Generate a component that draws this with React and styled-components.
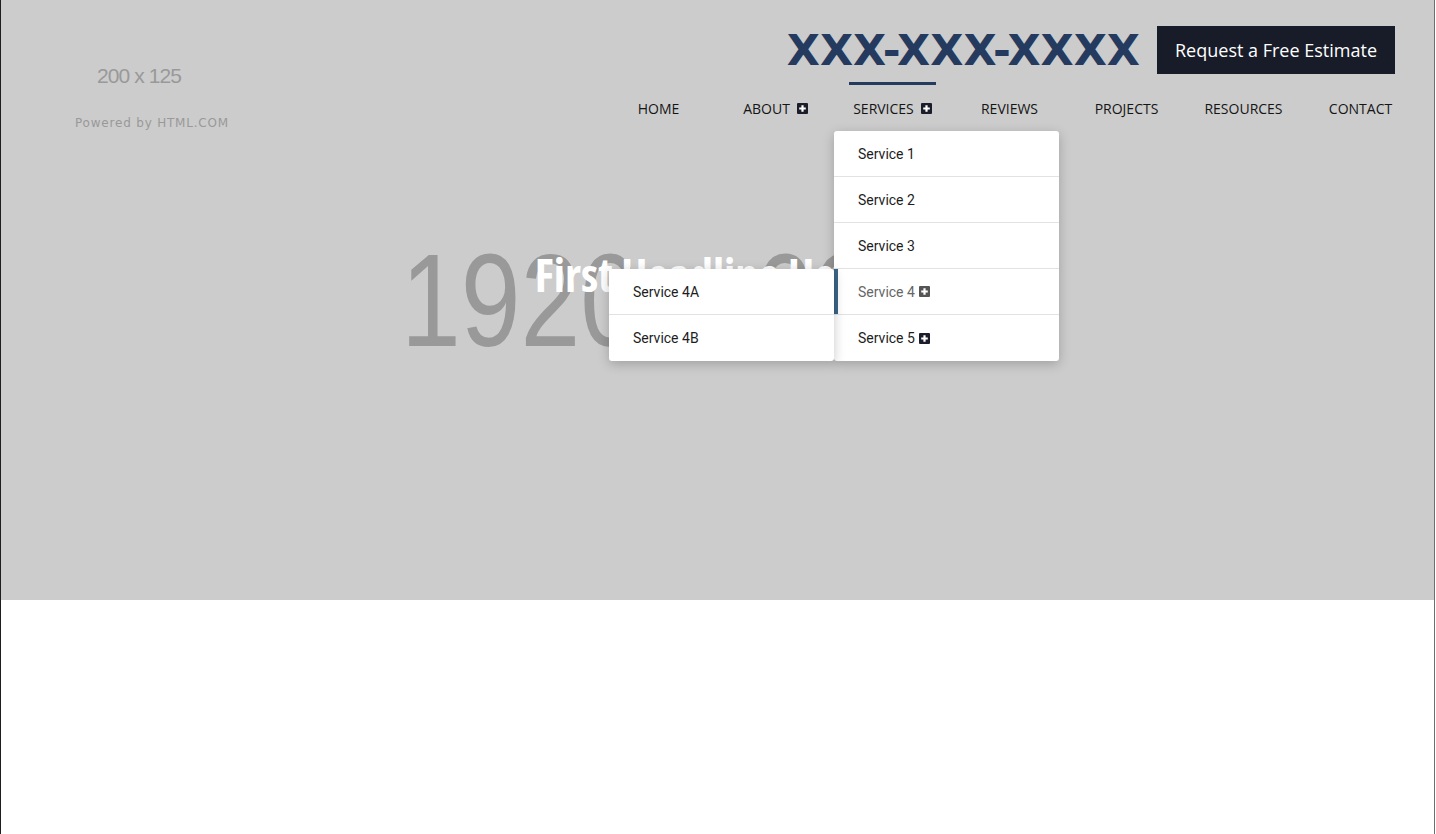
import React from 'react'
import styled, { createGlobalStyle } from 'styled-components'

const Global = createGlobalStyle`
	body {
		margin: 0;
		background: #fff;
		font-family: "Open Sans", "Liberation Sans", sans-serif;
	}
`;

const navy = '#243a5e';

const Frame = styled.div`
	width: 1435px;
	min-height: 834px;
	box-sizing: border-box;
	border-left: 1px solid #1e1e1e;
	border-right: 1px solid #6e6e6e;
	background: #fff;
`;

const Hero = styled.section`
	display: grid;
	height: 600px;
	background: #ccc;

	& > * {
		grid-area: 1 / 1;
	}
`;

// the hero is a placeholder image: its label is set in a narrow face
const Placeholder = styled.div`
	display: flex;
	align-items: center;
	padding-left: 400px;
	font-family: "Liberation Sans", Arial, sans-serif;
	font-size: 131px;
	color: #999;
	white-space: nowrap;

	span {
		display: inline-block;
		transform: scaleX(0.82);
		transform-origin: left center;
	}
`;

const HeroCopy = styled.div`
	display: flex;
	flex-direction: column;
	align-items: center;
	padding: 244px 28px 0 0;
	z-index: 1;
`;

const Headline = styled.h1`
	margin: 0;
	font-family: "Open Sans", sans-serif;
	font-stretch: condensed;
	font-weight: 700;
	font-size: 46px;
	line-height: 60px;
	color: #fff;
`;

const Header = styled.header`
	display: flex;
	justify-content: space-between;
	align-items: flex-start;
	align-self: start;
	z-index: 2;
`;

const Logo = styled.div`
	display: flex;
	flex-direction: column;
	align-items: flex-start;
	padding: 64px 0 0 74px;
	color: #999;
`;

const LogoSize = styled.span`
	margin-left: 22px;
	font-family: "Liberation Sans", Arial, sans-serif;
	font-size: 21px;
	line-height: 24px;
	letter-spacing: -0.9px;
`;

const LogoCredit = styled.span`
	margin-top: 28px;
	font-family: "DejaVu Sans", sans-serif;
	font-size: 12px;
	line-height: 14px;
	letter-spacing: 0.8px;
`;

const Side = styled.div`
	display: flex;
	flex-direction: column;
	align-items: flex-end;
	padding: 26px 15px 0 0;
`;

const TopRow = styled.div`
	display: flex;
	align-items: center;
	gap: 17px;
	margin-right: 24px;
`;

const Phone = styled.a`
	font-family: "DejaVu Sans", sans-serif;
	font-weight: 700;
	font-size: 43px;
	line-height: 48px;
	color: ${navy};
	text-decoration: none;
`;

const Estimate = styled.a`
	display: flex;
	align-items: center;
	height: 48px;
	padding: 0 18px;
	background: #181c28;
	color: #fff;
	font-size: 18px;
	text-decoration: none;
`;

const Nav = styled.nav`
	display: grid;
	grid-template-columns: repeat(7, 117px);
	margin-top: 8px;
`;

const NavItem = styled.div`
	position: relative;
	display: flex;
	justify-content: center;
`;

const NavLabel = styled.a`
	display: inline-flex;
	align-items: center;
	gap: 7px;
	height: 46px;
	padding: 0 4px;
	border-top: 3px solid ${p => (p.$active ? navy : 'transparent')};
	font-size: 14px;
	text-transform: uppercase;
	color: #151515;
	text-decoration: none;
	cursor: pointer;
`;

const Dropdown = styled.ul`
	position: absolute;
	top: 100%;
	${p => (p.$side === 'left' ? 'right: 100%; top: 0;' : 'left: 0;')}
	width: 225px;
	margin: 0;
	padding: 0;
	list-style: none;
	background: #fff;
	border-radius: 3px;
	box-shadow: 0 3px 12px rgba(0, 0, 0, 0.22);
	z-index: 3;
`;

const DropItem = styled.li`
	position: relative;
	display: flex;
	align-items: center;
	gap: 4px;
	height: 46px;
	box-sizing: border-box;
	padding-left: 24px;
	border-bottom: 1px solid #e2e2e2;
	font-family: Roboto, "Open Sans", sans-serif;
	font-size: 14px;
	color: ${p => (p.$hover ? '#666' : '#1d1d1d')};
	box-shadow: ${p => (p.$hover ? 'inset 4px 0 0 #3b6586' : 'none')};

	&:last-child {
		border-bottom: 0;
	}
`;

const PlusBox = ({ color = '#1b1e2a' }) => (
	<svg width="11" height="11" viewBox="0 0 11 11">
		<rect width="11" height="11" rx="1" fill={color} />
		<path d="M5.5 2.2v6.6M2.2 5.5h6.6" stroke="#fff" strokeWidth="2.2" />
	</svg>
);

const services = [
	{ name: 'Service 1' },
	{ name: 'Service 2' },
	{ name: 'Service 3' },
	{ name: 'Service 4', more: true, hover: true, sub: ['Service 4A', 'Service 4B'] },
	{ name: 'Service 5', more: true },
];

const navLinks = [
	{ name: 'Home' },
	{ name: 'About', more: true },
	{ name: 'Services', more: true, active: true },
	{ name: 'Reviews' },
	{ name: 'Projects' },
	{ name: 'Resources' },
	{ name: 'Contact' },
];

export default function App() {
	return (
		<Frame>
			<Global />
			<Hero>
				<Placeholder><span>1920 x 600</span></Placeholder>
				<HeroCopy>
					<Headline>First Headline Here</Headline>
				</HeroCopy>
				<Header>
					<Logo>
						<LogoSize>200 x 125</LogoSize>
						<LogoCredit>Powered by HTML.COM</LogoCredit>
					</Logo>
					<Side>
						<TopRow>
							<Phone>XXX-XXX-XXXX</Phone>
							<Estimate>Request a Free Estimate</Estimate>
						</TopRow>
						<Nav>
							{navLinks.map(link => (
								<NavItem key={link.name}>
									<NavLabel $active={link.active}>
										{link.name}
										{link.more && <PlusBox />}
									</NavLabel>
									{link.active && (
										<Dropdown>
											{services.map(s => (
												<DropItem key={s.name} $hover={s.hover}>
													{s.name}
													{s.more && <PlusBox color={s.hover ? '#555' : '#1b1e2a'} />}
													{s.sub && (
														<Dropdown $side="left">
															{s.sub.map(name => (
																<DropItem key={name}>{name}</DropItem>
															))}
														</Dropdown>
													)}
												</DropItem>
											))}
										</Dropdown>
									)}
								</NavItem>
							))}
						</Nav>
					</Side>
				</Header>
			</Hero>
		</Frame>
	)
}
